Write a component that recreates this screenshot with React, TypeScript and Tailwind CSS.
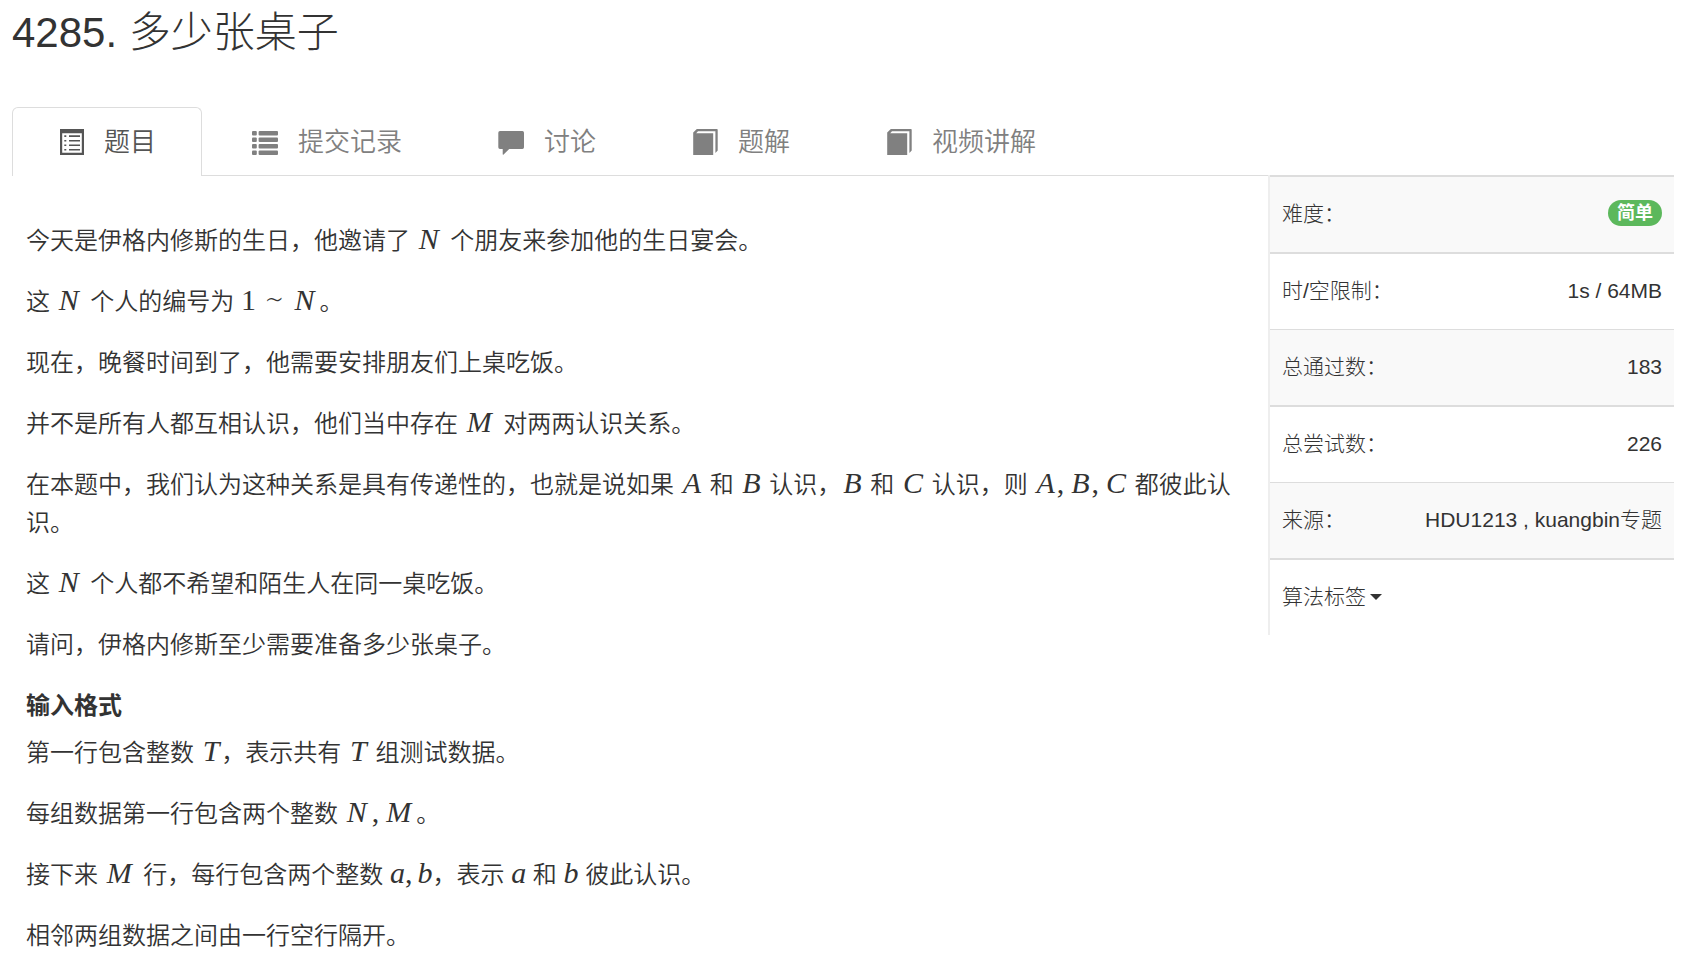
import type { ReactNode } from 'react';

function ListAltIcon() {
  return (
    <svg viewBox="0 0 26 26" className="size-[26px] shrink-0" fill="currentColor" aria-hidden="true">
      <path fillRule="evenodd" d="M2 0h24v26H2zM4.2 4.2v19.6h19.6V4.2z" />
      <path d="M6.3 6.3h2v1.6h-2zM11 6.3h11v1.6H11zM6.3 10.9h2v1.6h-2zM11 10.9h11v1.6H11zM6.3 15.5h2v1.6h-2zM11 15.5h11v1.6H11zM6.3 20h2v1.6h-2zM11 20h11v1.6H11z" />
    </svg>
  );
}

function ListIcon() {
  return (
    <svg viewBox="0 0 26 26" className="size-[26px] shrink-0" fill="currentColor" aria-hidden="true">
      {[2, 8.6, 15.1, 21.6].map((y) => (
        <g key={y}>
          <rect x="0" y={y} width="4.8" height="4.4" rx="1" />
          <rect x="6.6" y={y} width="19.4" height="4.4" rx="1" />
        </g>
      ))}
    </svg>
  );
}

function CommentIcon() {
  return (
    <svg viewBox="0 0 26 26" className="size-[26px] shrink-0" fill="currentColor" aria-hidden="true">
      <path d="M2 2h22.4a1.7 1.7 0 0 1 1.6 1.7v14.6a1.7 1.7 0 0 1-1.6 1.7H11.2L5.6 25.6a.5.5 0 0 1-.9-.3V20H2a1.7 1.7 0 0 1-1.7-1.7V3.7A1.7 1.7 0 0 1 2 2z" />
    </svg>
  );
}

function BookIcon() {
  return (
    <svg viewBox="0 0 26 26" className="size-[26px] shrink-0" fill="currentColor" aria-hidden="true">
      <path d="M1.2 3.6 4.8 0h19.9c.6 0 1 .4 1 1v20.6L23.4 24V2.2H6L4.2 4.2h17V26H1.2z" />
    </svg>
  );
}

const tabs = [
  { label: '题目', icon: <ListAltIcon />, active: true },
  { label: '提交记录', icon: <ListIcon /> },
  { label: '讨论', icon: <CommentIcon /> },
  { label: '题解', icon: <BookIcon /> },
  { label: '视频讲解', icon: <BookIcon /> },
];

const mathFont = "font-['Liberation_Serif','DejaVu_Serif',serif] text-[30px] leading-none";

/* Capital variable */
function V({ children }: { children: string }) {
  const wide = children === 'N' || children === 'M';
  return <i className={`${mathFont} ${wide ? 'pr-[5px] pl-[2px]' : 'px-[2px]'}`}>{children}</i>;
}

/* Lower-case variable */
function L({ children }: { children: string }) {
  return <i className={mathFont}>{children}</i>;
}

/* Separator between variables */
function Comma() {
  return <span className={`${mathFont} pr-[5px]`}>,</span>;
}

function P({ children }: { children: ReactNode }) {
  return <p className="mb-[23px] leading-[38px]">{children}</p>;
}

function InfoRow({ label, thick, shaded, children }: { label: ReactNode; thick?: boolean; shaded?: boolean; children?: ReactNode }) {
  const cell = `border-[#ddd] ${thick ? 'border-t-2' : 'border-t'} h-[74px] px-3 pb-px`;
  return (
    <tr className={shaded ? 'bg-[#f9f9f9]' : 'bg-white'}>
      <th scope="row" className={`${cell} box-content text-left font-light whitespace-nowrap`}>{label}</th>
      <td className={`${cell} box-content text-right whitespace-nowrap`}>{children}</td>
    </tr>
  );
}

export default function App() {
  return (
    <main className="bg-white px-3 font-['Liberation_Sans','Noto_Sans_CJK_SC',sans-serif] font-light text-[#333]">
      <h1 className="pt-[10px] text-[42px] leading-[46px]">4285. 多少张桌子</h1>

      <nav className="mt-[51px] border-b border-[#ddd]">
        <ul className="-mb-px flex gap-1 text-[26px] leading-9 font-[350]">
          {tabs.map((tab) => (
            <li key={tab.label}>
              <a
                href="#"
                className={
                  tab.active
                    ? 'flex h-[69px] items-center gap-5 rounded-t-md border border-b-0 border-[#ddd] bg-white px-[45px] text-[#555]'
                    : 'flex h-[69px] items-center gap-5 px-[46px] text-[#808080]'
                }
              >
                {tab.icon}
                <span>{tab.label}</span>
              </a>
            </li>
          ))}
        </ul>
      </nav>

      <div className="-mt-px flex items-start">
        <article className="min-w-0 flex-1 pt-[47px] pr-[27px] pl-[14px] text-2xl font-[350]">
          <P>今天是伊格内修斯的生日，他邀请了 <V>N</V> 个朋友来参加他的生日宴会。</P>
          <P>
            这 <V>N</V> 个人的编号为 <span className={mathFont}>1</span>{' '}
            <span className="px-[2px] font-['Noto_Sans','DejaVu_Sans',sans-serif] text-[30px] leading-none font-light">∼</span> <V>N</V>。
          </P>
          <P>现在，晚餐时间到了，他需要安排朋友们上桌吃饭。</P>
          <P>并不是所有人都互相认识，他们当中存在 <V>M</V> 对两两认识关系。</P>
          <P>
            在本题中，我们认为这种关系是具有传递性的，也就是说如果 <V>A</V> 和 <V>B</V> 认识，<V>B</V> 和 <V>C</V> 认识，则{' '}
            <V>A</V><Comma /><V>B</V><Comma /><V>C</V> 都彼此认识。
          </P>
          <P>这 <V>N</V> 个人都不希望和陌生人在同一桌吃饭。</P>
          <P>请问，伊格内修斯至少需要准备多少张桌子。</P>
          <h2 className="mb-[9px] leading-[38px] font-bold">输入格式</h2>
          <P>第一行包含整数 <V>T</V>，表示共有 <V>T</V> 组测试数据。</P>
          <P>每组数据第一行包含两个整数 <V>N</V><Comma /><V>M</V>。</P>
          <P>接下来 <V>M</V> 行，每行包含两个整数 <L>a</L><Comma /><L>b</L>，表示 <L>a</L> 和 <L>b</L> 彼此认识。</P>
          <P>相邻两组数据之间由一行空行隔开。</P>
        </article>

        <aside className="w-[406px] shrink-0">
          <table className="w-full border-separate border-spacing-0 border-l-2 border-[#eee] text-[21px] leading-[30px]">
            <tbody>
              <InfoRow label="难度：" thick shaded>
                <span className="mb-1 inline-block rounded-full bg-[#5cb85c] px-[9px] align-middle text-lg leading-[26px] font-bold text-white">简单</span>
              </InfoRow>
              <InfoRow label="时/空限制：" thick>1s / 64MB</InfoRow>
              <InfoRow label="总通过数：" shaded>183</InfoRow>
              <InfoRow label="总尝试数：" thick>226</InfoRow>
              <InfoRow label="来源：" shaded>HDU1213 , kuangbin专题</InfoRow>
              <InfoRow
                thick
                label={
                  <button type="button" className="inline-flex items-center gap-1">
                    算法标签
                    <svg viewBox="0 0 12 6" className="h-[6px] w-3" fill="currentColor" aria-hidden="true">
                      <path d="M0 0h12L6 6z" />
                    </svg>
                  </button>
                }
              />
            </tbody>
          </table>
        </aside>
      </div>
    </main>
  );
}
